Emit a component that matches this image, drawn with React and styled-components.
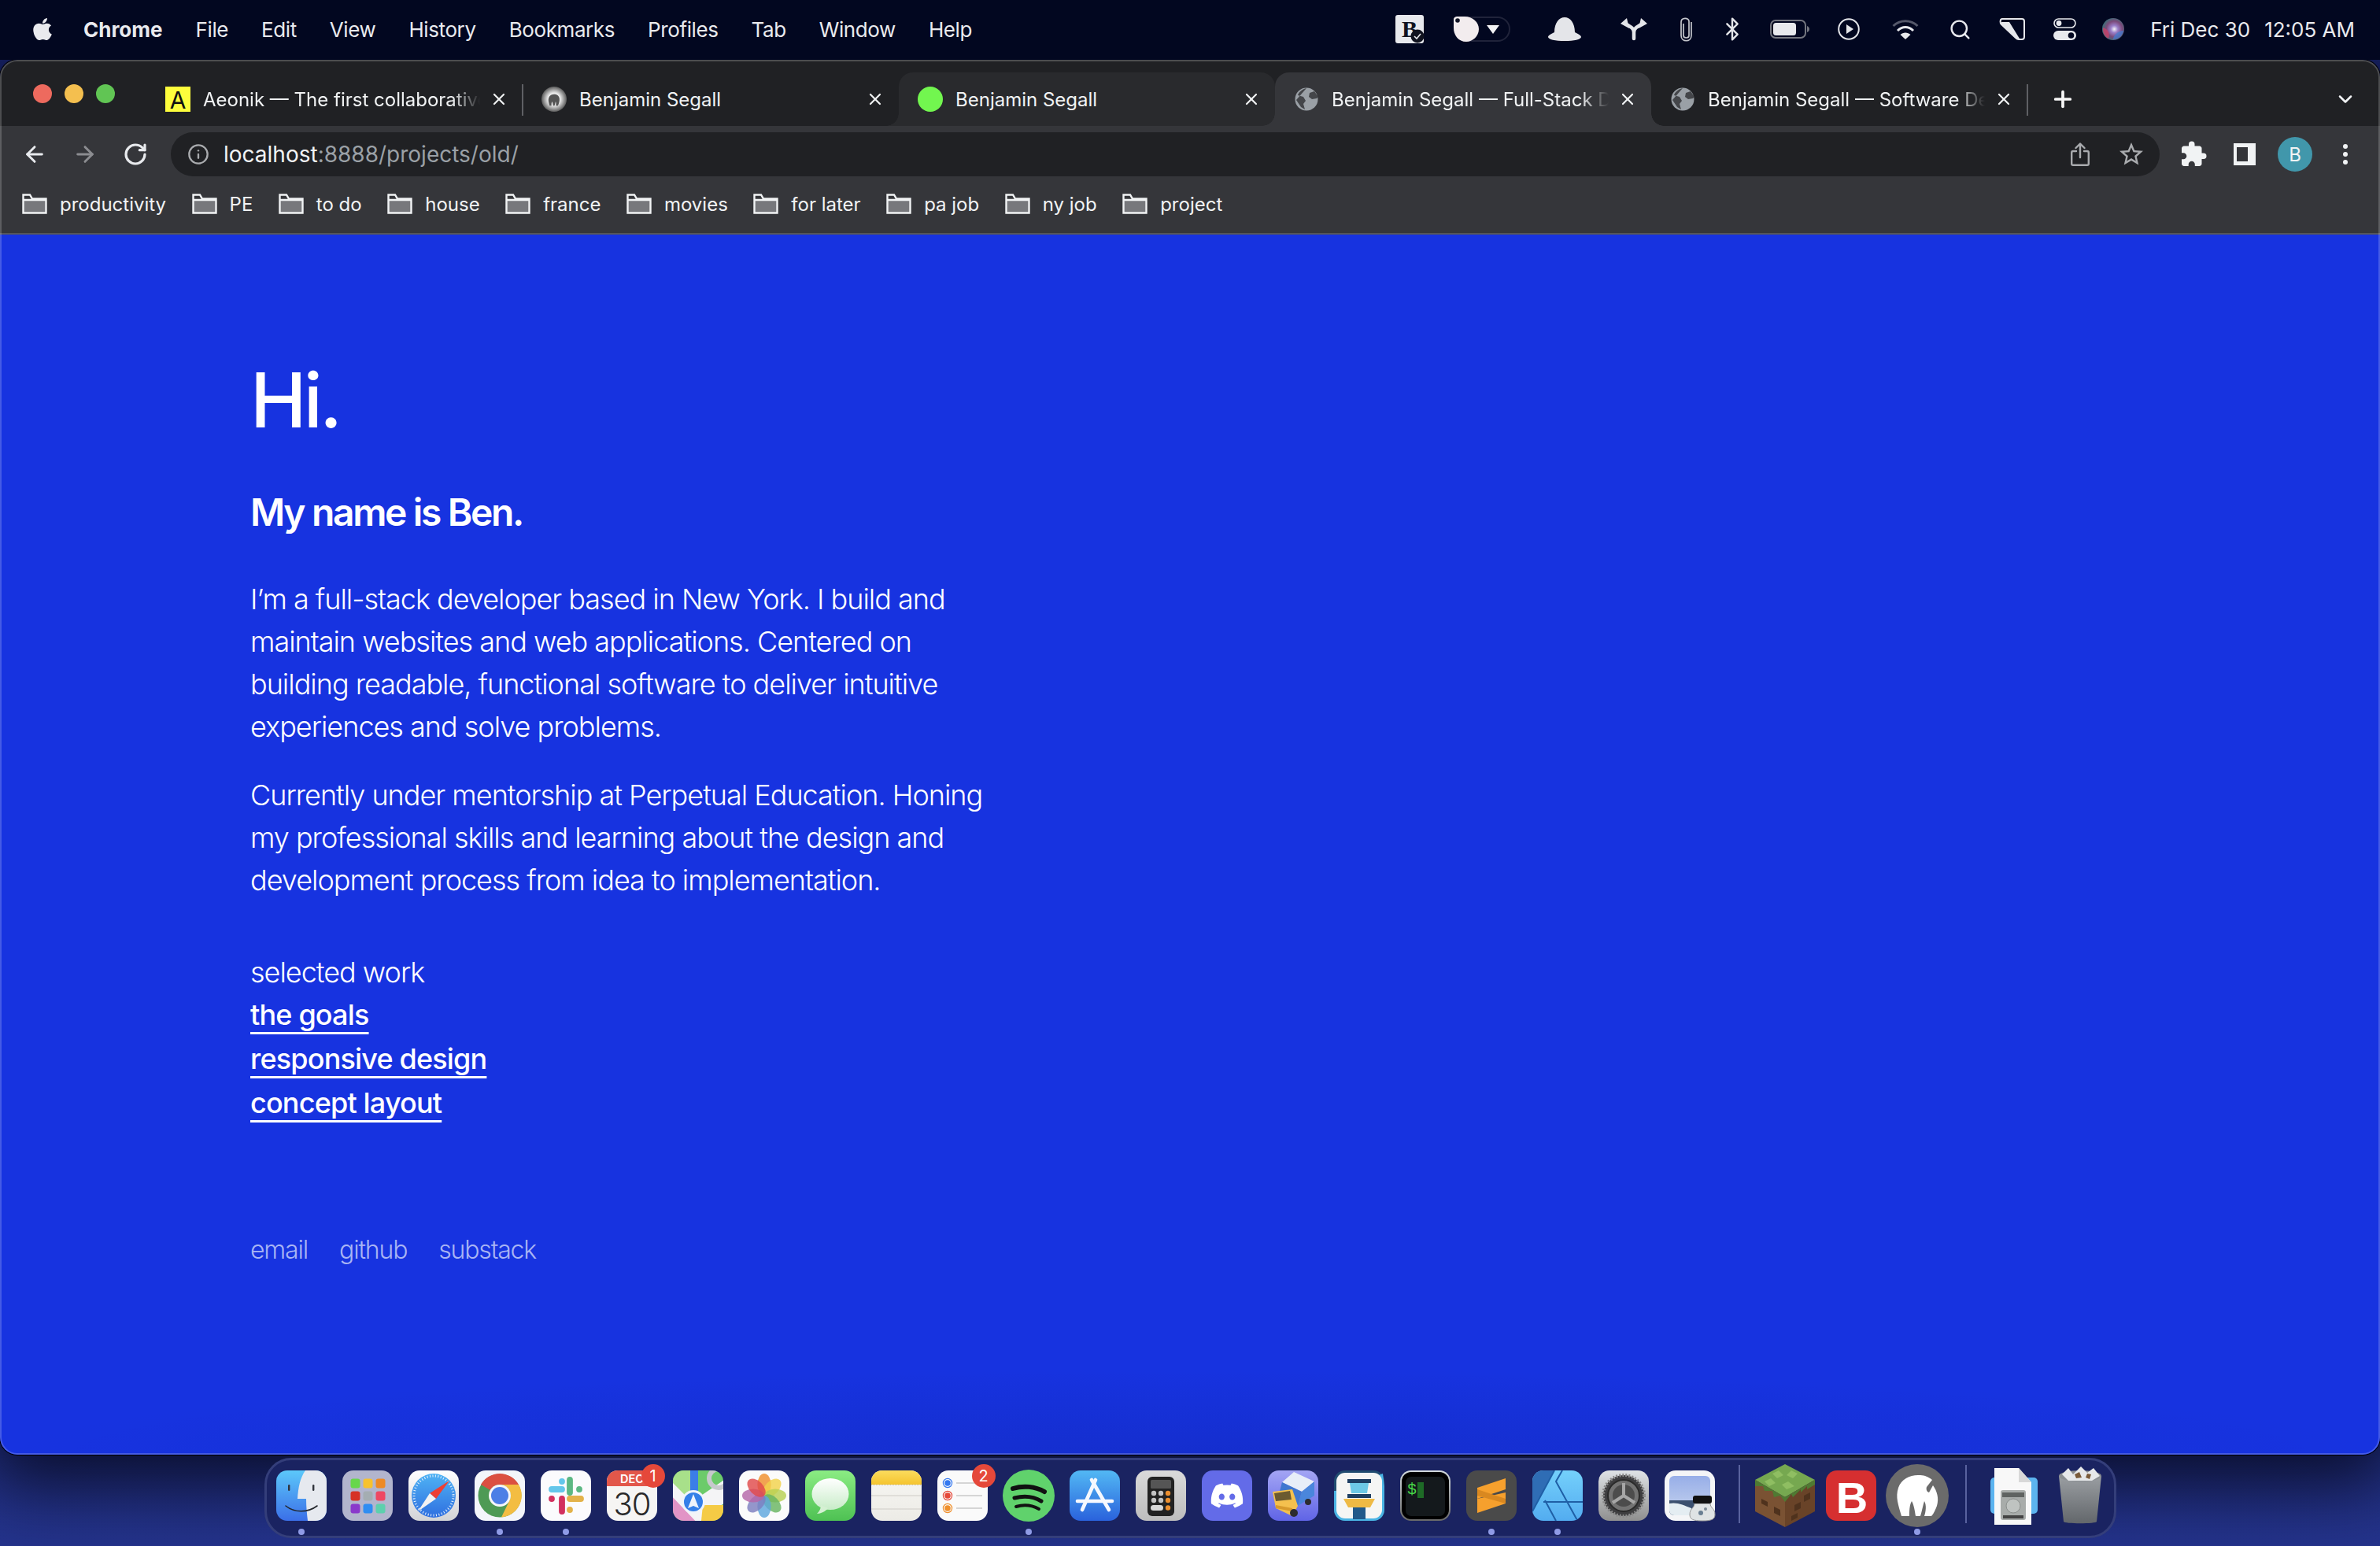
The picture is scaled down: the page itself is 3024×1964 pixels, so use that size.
import React from 'react';
import styled, { createGlobalStyle } from 'styled-components';
import { FaApple, FaDiscord } from 'react-icons/fa';
import { MdExtension, MdStarBorder } from 'react-icons/md';
import { ArrowLeft, ArrowRight, RotateCw, Info, Search, Bluetooth, X, Plus, ChevronDown } from 'lucide-react';

const GlobalStyle = createGlobalStyle`
  html, body {
    margin: 0;
    padding: 0;
    background: #22318a;
    font-family: Inter, "Liberation Sans", sans-serif;
    overflow: hidden;
  }
  * { box-sizing: border-box; }
`;

const Page = styled.div`
  display: flex;
  flex-direction: column;
  width: 3024px;
  height: 1964px;
  overflow: hidden;
  background: linear-gradient(#1a2670, #24338c);
`;

/* menu bar */
const MenuBar = styled.div`
  position: relative;
  z-index: 2;
  flex: none;
  display: flex;
  align-items: center;
  height: 76px;
  padding: 0 32px 2px 38px;
  background: #020720;
  color: #e9eaee;
  font-size: 26px;
`;

const MenuItem = styled.span`
  margin-left: ${(p) => p.$gap ?? 42}px;
  font-weight: ${(p) => (p.$bold ? 700 : 400)};
  letter-spacing: ${(p) => (p.$bold ? 0 : -0.4)}px;
`;

const StatusArea = styled.div`
  display: flex;
  align-items: center;
  margin-left: auto;
`;

const StatusSlot = styled.div`
  display: flex;
  align-items: center;
  justify-content: center;
  margin-left: ${(p) => p.$gap}px;
  width: ${(p) => p.$w}px;
  height: 36px;
  flex: none;
  overflow: visible;
  svg { display: block; overflow: visible; }
`;

const DateText = styled.div`
  display: flex;
  gap: 18px;
  margin-left: 33px;
  font-size: 26px;
  white-space: nowrap;
`;

/* browser window */
const Window = styled.div`
  position: relative;
  z-index: 1;
  flex: none;
  display: flex;
  flex-direction: column;
  height: 1772px;
  border-radius: 22px;
  overflow: hidden;
  box-shadow: 0 0 0 1px #000, 0 20px 90px 20px rgba(0, 0, 8, 0.72);
  &::before {
    content: '';
    position: absolute;
    inset: 0;
    z-index: 5;
    border: 2px solid rgba(255, 255, 255, 0.2);
    border-radius: 22px;
    pointer-events: none;
  }
`;

const TabStrip = styled.div`
  flex: none;
  display: flex;
  align-items: flex-end;
  height: 84px;
  padding-right: 35px;
  background: #202124;
`;

const Lights = styled.div`
  display: flex;
  gap: 16px;
  align-self: flex-start;
  margin: 31px 40px 0 42px;
`;

const Light = styled.span`
  width: 24px;
  height: 24px;
  border-radius: 50%;
  background: ${(p) => p.$color};
`;

const tabBg = { active: '#35363a', hover: '#292a2d' };

const Tab = styled.div`
  position: relative;
  flex: none;
  display: flex;
  align-items: center;
  width: 478px;
  height: 68px;
  padding: 0 21px 0 24px;
  color: #f1f3f4;
  font-size: 24px;
  border-radius: 18px 18px 0 0;
  z-index: ${(p) => (p.$state === 'active' ? 2 : 1)};
  background: ${(p) => tabBg[p.$state] ?? 'transparent'};
  ${(p) =>
    tabBg[p.$state]
      ? `
    &::before, &::after {
      content: '';
      position: absolute;
      bottom: 0;
      width: 16px;
      height: 16px;
    }
    &::before {
      left: -16px;
      background: radial-gradient(circle at 0 0, transparent 15.5px, ${tabBg[p.$state]} 16px);
    }
    &::after {
      right: -16px;
      background: radial-gradient(circle at 100% 0, transparent 15.5px, ${tabBg[p.$state]} 16px);
    }`
      : ''}
`;

const Favicon = styled.span`
  flex: none;
  display: flex;
  width: 32px;
  height: 32px;
  margin-right: 16px;
  svg { display: block; }
`;

const TabTitle = styled.span`
  flex: 1;
  min-width: 0;
  overflow: hidden;
  white-space: nowrap;
  ${(p) =>
    p.$fade
      ? `mask-image: linear-gradient(to right, #000 calc(100% - 36px), transparent);`
      : ''}
`;

const TabClose = styled(X)`
  flex: none;
  width: 24px;
  height: 24px;
  margin: 0 -3px 0 12px;
  color: #f1f3f4;
`;

const TabSep = styled.span`
  flex: none;
  width: 2px;
  height: 40px;
  margin: 0 -1px 13px;
  background: #5f6064;
`;

const NewTab = styled(Plus)`
  flex: none;
  width: 32px;
  height: 32px;
  margin: 0 0 18px 29px;
  color: #f6f6f6;
`;

const TabMenu = styled(ChevronDown)`
  flex: none;
  width: 28px;
  height: 28px;
  margin: 0 -5px 20px auto;
  color: #f1f3f4;
`;

const Toolbar = styled.div`
  flex: none;
  display: flex;
  align-items: center;
  height: 64px;
  padding: 8px 0 0 28px;
  background: #35363a;
`;

const NavButton = styled.span`
  display: flex;
  margin-right: ${(p) => p.$gap ?? 32}px;
  color: ${(p) => (p.$off ? '#8b8c90' : '#e8eaed')};
`;

const AddressBar = styled.div`
  flex: none;
  display: flex;
  align-items: center;
  width: 2527px;
  height: 56px;
  padding: 0 18px 0 21px;
  border-radius: 28px;
  background: #202124;
  font-size: 28px;
  color: #9aa0a6;
`;

const Url = styled.span`
  margin-left: 18px;
  b {
    font-weight: 400;
    color: #f1f3f4;
  }
`;

const ToolIcon = styled.span`
  display: flex;
  flex: none;
  margin-left: ${(p) => p.$gap}px;
  ${(p) => (p.$auto ? 'margin-left: auto;' : '')}
`;

const PanelIcon = styled.span`
  flex: none;
  width: 28px;
  height: 28px;
  margin-left: 33px;
  border: solid #f1f3f4;
  border-width: 5px 5px 5px 4px;
  border-right-width: 10px;
`;

const Avatar = styled.span`
  flex: none;
  display: flex;
  align-items: center;
  justify-content: center;
  width: 44px;
  height: 44px;
  margin-left: 28px;
  border-radius: 50%;
  background: #4197ab;
  color: #f1f3f4;
  font-size: 24px;
`;

const Kebab = styled.span`
  flex: none;
  display: flex;
  flex-direction: column;
  gap: 4px;
  margin-left: 39px;
  i {
    width: 6px;
    height: 6px;
    border-radius: 50%;
    background: #f1f3f4;
  }
`;

const BookmarkBar = styled.div`
  flex: none;
  display: flex;
  align-items: center;
  gap: 32.5px;
  height: 74px;
  padding: 0 0 2px 28px;
  background: #35363a;
  border-bottom: 2px solid #55565a;
  color: #f1f3f4;
  font-size: 24px;
`;

const Bookmark = styled.span`
  display: flex;
  align-items: center;
  gap: 16px;
  white-space: nowrap;
`;

/* page content */
const Content = styled.main`
  position: relative;
  flex: 1;
  padding: 153px 0 0 318px;
  background: #1733e0;
  color: #fff;
  &::after {
    content: '';
    position: absolute;
    left: 0;
    right: 0;
    bottom: 0;
    height: 110px;
    background: radial-gradient(ellipse 50% 100% at 50% 100%, rgba(8, 20, 110, 0.16), transparent);
    pointer-events: none;
  }
`;

const Hello = styled.h1`
  margin: 0 0 56px;
  font-size: 96px;
  line-height: 1.2;
  font-weight: 500;
  letter-spacing: -0.04em;
`;

const Name = styled.h2`
  margin: 0 0 54px;
  font-size: 48px;
  line-height: 1.2;
  font-weight: 600;
  letter-spacing: -0.049em;
`;

const Paragraph = styled.p`
  width: 950px;
  margin: 0 0 33px;
  font-size: 36px;
  line-height: 54px;
  font-weight: 300;
  letter-spacing: -0.028em;
`;

const Selected = styled.div`
  margin-top: 64px;
  font-size: 36px;
  line-height: 52px;
  font-weight: 300;
  letter-spacing: -0.028em;
`;

const WorkLink = styled.a`
  display: block;
  width: fit-content;
  font-size: 36px;
  line-height: 56px;
  font-weight: 500;
  letter-spacing: -0.023em;
  color: #fff;
  text-decoration: underline;
  text-decoration-thickness: 3px;
  text-underline-offset: 9px;
  text-decoration-skip-ink: none;
`;

const Footer = styled.div`
  display: flex;
  gap: 40px;
  margin-top: 135px;
  font-size: 32px;
  line-height: 48px;
  font-weight: 300;
  letter-spacing: -0.037em;
  color: #a9b5f4;
`;

/* dock */
const DockArea = styled.div`
  position: relative;
  z-index: 2;
  flex: 1;
  display: flex;
  justify-content: center;
  padding-top: 4px;
`;

const Dock = styled.div`
  display: flex;
  height: 102px;
  padding: 13px 1px 0 2px;
  border: 3px solid #343e7a;
  border-radius: 34px;
  background: #1a2361;
`;

const DockCell = styled.div`
  flex: none;
  display: flex;
  flex-direction: column;
  align-items: center;
  width: 84px;
`;

const DockIcon = styled.div`
  position: relative;
  display: flex;
  align-items: center;
  justify-content: center;
  width: 64px;
  height: 64px;
  svg { flex: none; display: block; overflow: visible; }
`;

const Badge = styled.span`
  position: absolute;
  top: -8px;
  right: -10px;
  display: flex;
  align-items: center;
  justify-content: center;
  width: 30px;
  height: 30px;
  border-radius: 50%;
  background: #e5483a;
  color: #fff;
  font-size: 20px;
`;

const RunDot = styled.span`
  width: 8px;
  height: 8px;
  margin-top: 10px;
  border-radius: 50%;
  background: #8f9be6;
  opacity: ${(p) => (p.$on ? 1 : 0)};
`;

const DockSep = styled.span`
  flex: none;
  width: 2px;
  height: 74px;
  margin: -7px ${(p) => p.$r}px 0 ${(p) => p.$l}px;
  background: #59629e;
`;

/* little drawings */
const FolderIcon = () => (
  <svg width="32" height="26" viewBox="0 0 32 26">
    <path d="M2 8h28v16H2z" fill="#77787c" />
    <path d="M1.5 3V24.5H30.5V6.5H13L10 1.5H1.5z M1.5 8H30.5" fill="none" stroke="#f1f3f4" strokeWidth="2.4" />
  </svg>
);

const Globe = () => (
  <svg width="32" height="32" viewBox="0 0 32 32">
    <circle cx="16" cy="16" r="14.5" fill="#9aa0a6" />
    <path d="M16 2c-5 1-10 5-11 9l7 2 3 5-3 4 2 7-5-3-6-9z M26 6l-6 2-1 5 4 3 6-1 2-2z" fill="#35363a" opacity=".85" />
  </svg>
);

const Squircle = ({ fill, stroke }) => <rect x="0" y="0" width="64" height="64" rx="14" fill={fill} stroke={stroke} />;

const Grad = ({ id, from, to, x2 = 0, y2 = 1 }) => (
  <linearGradient id={id} x1="0" y1="0" x2={x2} y2={y2}>
    <stop offset="0" stopColor={from} />
    <stop offset="1" stopColor={to} />
  </linearGradient>
);

const Ico = ({ w = 64, h = 64, vb = '0 0 64 64', children }) => (
  <svg width={w} height={h} viewBox={vb}>{children}</svg>
);

const Finder = () => (
  <Ico>
    <defs><Grad id="fi" from="#5cc8fa" to="#3b6fe8" /></defs>
    <clipPath id="fic"><rect width="64" height="64" rx="14" /></clipPath>
    <g clipPath="url(#fic)">
      <rect width="64" height="64" fill="url(#fi)" />
      <path d="M37 0C30 10 28 22 27 36h11c0 10 1 20 2 28h24V0z" fill="#e6e9ef" />
    </g>
    <rect x="15" y="18" width="2.4" height="8" rx="1.2" fill="#30343c" />
    <rect x="46" y="18" width="2.4" height="8" rx="1.2" fill="#30343c" />
    <path d="M12 45c11 9 28 9 40 0" fill="none" stroke="#23262c" strokeWidth="1.6" strokeLinecap="round" />
  </Ico>
);

const Launchpad = () => {
  const colors = ['#67d74b', '#f7c22f', '#ee8a24', '#d63226', '#a4adb2', '#ee4763', '#8a39cb', '#2f8df2', '#5dd0ad'];
  return (
    <Ico>
      <Squircle fill="#b2b5cd" />
      {colors.map((c, i) => (
        <rect key={c} x={10.5 + (i % 3) * 16} y={10.5 + Math.floor(i / 3) * 16} width="12" height="12" rx="3" fill={c} />
      ))}
    </Ico>
  );
};

const Safari = () => (
  <Ico>
    <defs><Grad id="sa" from="#ffffff" to="#d2d3d6" /><Grad id="sb" from="#4fb3f4" to="#2f6fe0" /></defs>
    <Squircle fill="url(#sa)" />
    <circle cx="32" cy="32" r="28" fill="url(#sb)" />
    <circle cx="32" cy="32" r="25" fill="none" stroke="#e8f2fb" strokeWidth="3" strokeDasharray="1 2.5" />
    <path d="M52 13 27 29 35 36z" fill="#ee3f33" />
    <path d="M12 52 35 36 27 29z" fill="#f2f2f2" />
  </Ico>
);

const Chrome = () => (
  <Ico>
    <Squircle fill="#f3f5fa" />
    <circle cx="32" cy="32" r="27.5" fill="#4e9a55" />
    <path d="M8 18A27.5 27.5 0 0 1 56 18H32A14 14 0 0 0 20 25z" fill="#db5041" />
    <path d="M56 18A27.5 27.5 0 0 1 34 59.4L44 39A14 14 0 0 0 32 18z" fill="#f3bd42" />
    <circle cx="32" cy="32" r="14" fill="#f5f6f8" />
    <circle cx="32" cy="32" r="11" fill="#4c7fe6" />
  </Ico>
);

const Slack = () => (
  <Ico>
    <Squircle fill="#fbfbfd" />
    <g strokeWidth="7.8" strokeLinecap="round" fill="none">
      <path d="M27 14v0M27 24H14" stroke="#63c6ea" />
      <path d="M37 12v16M49 24h0" stroke="#5cb883" />
      <path d="M37 36h14M37 50v0" stroke="#e3b24a" />
      <path d="M27 36v16M14 36h0" stroke="#d2315f" />
    </g>
  </Ico>
);

const Calendar = () => (
  <Ico>
    <Squircle fill="#f6f5f3" />
    <path d="M0 20V14A14 14 0 0 1 14 0H50A14 14 0 0 1 64 14V20z" fill="#e2574a" />
    <text x="32" y="16" textAnchor="middle" fontSize="14.5" fontWeight="600" fill="#fff" fontFamily="Inter">DEC</text>
    <text x="32" y="57" textAnchor="middle" fontSize="40" fontWeight="300" fill="#2a2a2a" fontFamily="Inter" letterSpacing="-1">30</text>
  </Ico>
);

const Maps = () => (
  <Ico>
    <clipPath id="mac"><rect width="64" height="64" rx="14" /></clipPath>
    <g clipPath="url(#mac)">
      <rect width="64" height="64" fill="#6ccb6a" />
      <path d="M0 0h26v50L0 20z" fill="#a8e08a" />
      <path d="M0 30 24 52 34 64H0z" fill="#e294c6" />
      <path d="M-4 12 40 56 34 70 -4 30z M24 40 68 10v30L36 60z" fill="#f4f4f6" />
      <path d="M38 44 64 44V64H36z" fill="#f5cb45" />
      <path d="M22 0h10v30H22z" fill="#3b7ee8" />
      <circle cx="58" cy="10" r="12" fill="none" stroke="#c6c9cc" strokeWidth="6" />
      <circle cx="26" cy="40" r="15" fill="#f0f4fa" />
      <circle cx="26" cy="40" r="12" fill="#347fe8" />
      <path d="M26 30 33 48 26 45 19 48z" fill="#eef3fb" />
    </g>
  </Ico>
);

const Photos = () => {
  const petals = ['#ef8f2c', '#f2d24a', '#b7cf53', '#68b560', '#5da6dd', '#7d7fc0', '#b567a8', '#e04a4a'];
  return (
    <Ico>
      <Squircle fill="#fbfbfb" />
      {petals.map((c, i) => (
        <ellipse key={c} cx="32" cy="18" rx="8.6" ry="14" fill={c} opacity=".82" transform={`rotate(${i * 45} 32 32)`} />
      ))}
    </Ico>
  );
};

const Messages = () => (
  <Ico>
    <defs><Grad id="me" from="#8bec83" to="#4ec153" /><Grad id="mb" from="#ffffff" to="#c8ecc8" /></defs>
    <Squircle fill="url(#me)" />
    <ellipse cx="32" cy="30" rx="23.5" ry="20" fill="url(#mb)" />
    <path d="M20 44c0 5-2 8-5 11 5 0 11-3 14-7z" fill="#d5f0d3" />
  </Ico>
);

const Notes = () => (
  <Ico>
    <defs><Grad id="no" from="#fbdc5e" to="#f5c42e" /><Grad id="nb" from="#f8f7f3" to="#ecebe6" /></defs>
    <Squircle fill="url(#nb)" />
    <path d="M0 18V14A14 14 0 0 1 14 0H50A14 14 0 0 1 64 14V18z" fill="url(#no)" />
    <path d="M0 18.5H64" stroke="#c8c6c0" strokeWidth="1" strokeDasharray="1 1" />
    <path d="M0 32H64M0 49H64" stroke="#dad8d2" strokeWidth="1.4" />
  </Ico>
);

const Reminders = () => (
  <Ico>
    <Squircle fill="#fafafa" />
    {[['#3478f0', 16], ['#e5483a', 32], ['#ef8f2c', 48]].map(([c, y]) => (
      <g key={c}>
        <circle cx="13" cy={y} r="5.6" fill="none" stroke={c} strokeWidth="1.2" />
        <circle cx="13" cy={y} r="3.8" fill={c} />
        <path d={`M24 ${y}H57`} stroke="#c9c9c9" strokeWidth="1.6" />
      </g>
    ))}
  </Ico>
);

const Spotify = () => (
  <svg width="66" height="66" viewBox="0 0 66 66">
    <circle cx="33" cy="33" r="33" fill="#60d26c" />
    <g fill="none" stroke="#111" strokeLinecap="round">
      <path d="M13 24c13-4 28-3 40 4" strokeWidth="6" />
      <path d="M15 36c12-3 24-2 34 4" strokeWidth="5" />
      <path d="M17 47c10-3 20-2 29 3" strokeWidth="4" />
    </g>
  </svg>
);

const AppStore = () => (
  <Ico>
    <defs><Grad id="ap" from="#52b8f4" to="#2a62dc" /></defs>
    <Squircle fill="url(#ap)" />
    <g stroke="#f6f8fe" strokeWidth="4.6" strokeLinecap="round">
      <path d="M33 12 16 50" />
      <path d="M28 12 50 50" />
      <path d="M10 39H54" />
    </g>
  </Ico>
);

const Calculator = () => {
  const keys = ['#c4c4c4', '#c4c4c4', '#ec8f2f', '#c4c4c4', '#c4c4c4', '#ec8f2f'];
  return (
    <Ico>
      <defs><Grad id="ca" from="#dadada" to="#bdbdbd" /></defs>
      <Squircle fill="url(#ca)" />
      <rect x="15" y="8" width="34" height="50" rx="6" fill="#222" />
      <rect x="19" y="12" width="26" height="11" rx="1.5" fill="#555" />
      {keys.map((c, i) => (
        <circle key={i} cx={23 + (i % 3) * 9} cy={29 + Math.floor(i / 3) * 9} r="3.2" fill={c} />
      ))}
      <rect x="19" y="44" width="16" height="7" rx="3.5" fill="#d8d8d8" />
      <circle cx="41" cy="47.5" r="3.2" fill="#ec8f2f" />
    </Ico>
  );
};

const Discord = () => (
  <Ico>
    <Squircle fill="#636be8" />
    <FaDiscord x="10" y="10" size={44} color="#fff" />
  </Ico>
);

const Transmit = () => (
  <Ico>
    <defs><Grad id="tr" from="#a3a5f4" to="#6064e6" /></defs>
    <Squircle fill="url(#tr)" />
    <path d="M33 2 59 14 43 27 18 15z" fill="#e8eef8" />
    <path d="M43 27 59 14V32L38 45z" fill="#4a86dc" />
    <path d="M18 15 43 27 38 45 14 30z" fill="#3f77cf" />
    <path d="M6 27 31 24 38 45 31 58 10 48z" fill="#f4c04e" />
    <path d="M8 29 28 26 30 37 10 39z" fill="#6b5a30" />
    <path d="M10 44 31 48V52L10 48z" fill="#d89a2c" />
    <circle cx="33" cy="54" r="5" fill="#2c2c30" />
    <circle cx="51" cy="40" r="4" fill="#2c2c30" />
  </Ico>
);

const Tower = () => (
  <Ico>
    <Squircle fill="#204c70" />
    <path d="M2 26H0V50A14 14 0 0 0 14 64H50A14 14 0 0 0 64 50V20L62 4z" fill="#4ab4e4" />
    <rect x="3" y="3" width="58" height="58" rx="11" fill="#f5f6f4" />
    <rect x="17" y="11" width="30" height="5" fill="#1e3f63" />
    <path d="M20 16H44L42 29H22z" fill="#6dc9e6" />
    <rect x="17" y="30" width="30" height="5" fill="#1e3f63" />
    <path d="M12 36H52L46 47H18z" fill="#eeba45" />
    <rect x="24" y="47" width="16" height="15" fill="#215a8a" />
  </Ico>
);

const Terminal = () => (
  <Ico>
    <defs><Grad id="te" from="#d4dbde" to="#6a6a6a" /></defs>
    <rect width="64" height="64" rx="14" fill="url(#te)" />
    <rect x="2" y="2" width="60" height="60" rx="12" fill="#000" />
    <rect x="7" y="8" width="50" height="50" rx="7" fill="#14191c" />
    <text x="9" y="30" fontSize="20" fontFamily="'Liberation Mono'" fill="#48d848">$</text>
    <rect x="22" y="15" width="8" height="20" fill="#1e6b26" />
  </Ico>
);

const Sublime = () => (
  <Ico>
    <Squircle fill="#4a4a4a" />
    <path d="M14 22 50 10V24L14 36z" fill="#f6a02d" />
    <path d="M14 36 50 28V42L14 54z" fill="#f6a02d" />
    <path d="M14 24 50 36V42L14 32z" fill="#d98820" />
  </Ico>
);

const Affinity = () => (
  <Ico>
    <defs><Grad id="af" from="#74d0fb" to="#53acf0" /></defs>
    <clipPath id="afc"><rect width="64" height="64" rx="14" /></clipPath>
    <g clipPath="url(#afc)">
      <rect width="64" height="64" fill="url(#af)" />
      <path d="M0 0H28L0 52z" fill="#2f6db5" />
      <path d="M28 0 0 52M38 0 30 14 64 76M14 40H64M16 38 30 64" fill="none" stroke="#1f5fa6" strokeWidth="2" />
    </g>
  </Ico>
);

const SystemPrefs = () => (
  <Ico>
    <defs><Grad id="sp" from="#dfe3e6" to="#8f8f8f" /></defs>
    <Squircle fill="url(#sp)" />
    <circle cx="32" cy="32" r="26" fill="#3e3e40" />
    <circle cx="32" cy="32" r="26" fill="none" stroke="#8a8a8a" strokeWidth="4" strokeDasharray="2 2" />
    <circle cx="32" cy="32" r="20" fill="#737373" stroke="#2a2a2a" strokeWidth="2" />
    <circle cx="32" cy="32" r="14" fill="#4c4c4c" />
    <path d="M32 32V16M32 32 18 41M32 32 46 41" stroke="#a6a6a6" strokeWidth="4" />
  </Ico>
);

const Preview = () => (
  <Ico>
    <defs><Grad id="pr" from="#97aee8" to="#c7d4ee" /></defs>
    <Squircle fill="#f4f5f7" />
    <rect x="6" y="7" width="52" height="50" rx="6" fill="url(#pr)" />
    <path d="M6 38H58V51A6 6 0 0 1 52 57H12A6 6 0 0 1 6 51z" fill="#3a4f6e" />
    <path d="M6 42c10-2 18 2 28 6v9H12A6 6 0 0 1 6 51z" fill="#e4edf2" />
    <path d="M32 56c0-8 6-8 6-14h20c0 6 6 6 6 14 0 6-4 8-16 8s-16-2-16-8z" fill="#dfe3e4" stroke="#999" strokeWidth="1" />
    <rect x="36" y="32" width="24" height="10" rx="3" fill="#111" />
    <circle cx="46" cy="54" r="3" fill="#6a7f92" />
    <circle cx="52" cy="49" r="2" fill="#7d8a94" />
  </Ico>
);

const Minecraft = () => (
  <svg width="76" height="80" viewBox="0 0 76 80">
    <path d="M38 0 76 20 38 42 0 20z" fill="#76a850" />
    <path d="M0 20 38 42V80L0 60z" fill="#7a5233" />
    <path d="M76 20 38 42V80L76 60z" fill="#694328" />
    <path d="M0 20 38 42 76 20V26L66 32V28L58 36V32L48 42 46 38 38 48 32 40 24 42 22 34 12 34 10 28 0 28z" fill="#4f7a32" />
    <path d="M22 12 30 8 36 14 28 18zM46 8 54 12 48 18 40 14zM34 26 42 22 50 28 40 32zM12 22 20 18 26 24 18 28z" fill="#8fbe62" />
    <path d="M8 44l8 4v6l-8-4zM24 54l8 4v8l-8-4zM50 52l8-4v8l-8 4zM62 40l8-4v8l-8 4zM46 66l8-4v6l-8 4z" fill="#4f321d" />
  </svg>
);

const Bitdefender = () => (
  <Ico>
    <Squircle fill="#d62f30" />
    <text x="33" y="54" textAnchor="middle" fontSize="56" fontWeight="700" fill="#fff" fontFamily="'Liberation Sans'">B</text>
  </Ico>
);

const Mamp = () => (
  <svg width="80" height="80" viewBox="0 0 80 80">
    <circle cx="40" cy="40" r="40" fill="#6b6b6b" />
    <svg x="8" y="8" width="64" height="64" viewBox="0 0 64 64">
      <path
        d="M12 58C8 44 4 34 8 22 12 10 24 5 36 6c6 .5 10 2 15 6l-7 9c-1 3 0 6 3 7l5-9c5 7 8 16 5 26-2 5-4 10-7 13h-9c2-6 3-14 0-19-2 6-3 13-5 19h-6c-1-6-2-14-5-19-3 5-3 13-3 19z"
        fill="#fff"
      />
    </svg>
  </svg>
);

const Applications = () => (
  <svg width="60" height="74" viewBox="0 0 60 74">
    <rect x="0" y="14" width="60" height="46" rx="5" fill="#5cb4ef" />
    <path d="M5 2H36L52 20V74H5z" fill="#f8f8f8" />
    <path d="M36 2 52 20H36z" fill="#d8d8d8" />
    <rect x="13" y="30" width="32" height="38" rx="3" fill="#a8acaa" />
    <rect x="15" y="33" width="28" height="6" fill="#5f6361" />
    <circle cx="29" cy="50" r="9" fill="#bfc3c1" stroke="#8b8f8d" />
    <rect x="16" y="62" width="26" height="4" fill="#444" />
  </svg>
);

const Trash = () => (
  <svg width="58" height="74" viewBox="0 0 58 74">
    <defs><Grad id="tc" from="#9a9ea2" to="#63676b" /></defs>
    <path d="M2 12 8 70c0 3 42 3 42 0L56 12z" fill="url(#tc)" />
    <ellipse cx="29" cy="12" rx="27" ry="7" fill="#8b8f93" />
    <path d="M6 10 14 2 20 10 30 0 38 8 46 2 54 12 44 18H14z" fill="#e6e8ea" />
    <path d="M22 10l6-3 3 7-7 1zM38 9l5 1-2 6-5-2z" fill="#7a5b3a" />
  </svg>
);

const BIcon = () => (
  <svg width="36" height="36" viewBox="0 0 36 36">
    <rect width="36" height="36" rx="3" fill="#e8e9ed" />
    <text x="8" y="28" fontSize="30" fontWeight="700" fontFamily="'Liberation Serif'" fill="#11131f">B</text>
    <circle cx="28" cy="27" r="8.5" fill="#11131f" />
    <path d="M24 27l3 3 5-6" fill="none" stroke="#e8e9ed" strokeWidth="1.6" />
  </svg>
);

const ToggleIcon = () => (
  <svg width="72" height="32" viewBox="0 0 72 32">
    <rect x="1" y="1" width="70" height="30" rx="15" fill="none" stroke="#20233a" strokeWidth="2" />
    <path d="M0 4C0 1 2 0 5 0H14C24 0 32 7 32 16S24 32 16 32C6 32 0 24 0 14z" fill="#f2ecee" />
    <circle cx="5" cy="5" r="2.8" fill="#111425" />
    <path d="M42 11H58L50 22z" fill="#f2f2f4" />
  </svg>
);

const HatIcon = () => (
  <svg width="42" height="30" viewBox="0 0 42 30">
    <path d="M8 19C8 7 14 0 21 0S34 7 34 19c4 2 8 4 8 6 0 3-9 5-21 5S0 28 0 25c0-2 4-4 8-6z" fill="#e4e5e9" />
  </svg>
);

const SplitIcon = () => (
  <svg width="34" height="28" viewBox="0 0 34 28">
    <path d="M17 26V18C17 13 13 11 6 7M17 18C17 13 21 11 28 7" fill="none" stroke="#e4e5e9" strokeWidth="4.5" strokeLinecap="round" />
    <path d="M0 7 8 0 11 13zM34 7 26 0 23 13z" fill="#e4e5e9" />
  </svg>
);

const ClipIcon = () => (
  <svg width="17" height="32" viewBox="0 0 17 32">
    <path d="M5 9V24C5 28 12 28 12 24V6C12 1 2 1 2 7V24C2 33 15 33 15 24V7" fill="none" stroke="#c4c6cc" strokeWidth="1.7" />
  </svg>
);

const BatteryIcon = () => (
  <svg width="50" height="24" viewBox="0 0 50 24">
    <rect x="1" y="1" width="44" height="22" rx="6" fill="none" stroke="#74767f" strokeWidth="2" />
    <rect x="4" y="4" width="29" height="16" rx="3.5" fill="#e8e9ed" />
    <path d="M47 8c2 1 3 2 3 4s-1 3-3 4z" fill="#74767f" />
  </svg>
);

const PlayIcon = () => (
  <svg width="28" height="28" viewBox="0 0 28 28">
    <circle cx="14" cy="14" r="12.8" fill="none" stroke="#e4e5e9" strokeWidth="2" />
    <path d="M11 8 20 14 11 20z" fill="#e4e5e9" />
  </svg>
);

const WifiIcon = () => (
  <svg width="34" height="26" viewBox="0 0 34 26">
    <path d="M1.5 9C10 .5 24 .5 32.5 9" fill="none" stroke="#55586a" strokeWidth="3" />
    <path d="M7 15C13 9 21 9 27 15" fill="none" stroke="#e8e9ed" strokeWidth="3" />
    <path d="M17 26 10.5 20C14 16.5 20 16.5 23.5 20z" fill="#e8e9ed" />
  </svg>
);

const TagIcon = () => (
  <svg width="32" height="28" viewBox="0 0 32 28">
    <path d="M3 1H28C30 1 31 2 31 4V24C31 26 30 27 28 27H24C22 27 21 26 20 25L2 8C0 6 0 1 3 1z" fill="none" stroke="#e6e7eb" strokeWidth="2" />
    <path d="M2 5H12L25 26H21L2 8z" fill="#e6e7eb" />
  </svg>
);

const ControlsIcon = () => (
  <svg width="29" height="28" viewBox="0 0 29 28">
    <rect x="1" y="1" width="27" height="11" rx="5.5" fill="none" stroke="#e8e9ed" strokeWidth="1.6" />
    <circle cx="7" cy="6.5" r="3.4" fill="#e8e9ed" />
    <rect y="16" width="29" height="12" rx="6" fill="#e8e9ed" />
    <circle cx="22.5" cy="22" r="3.8" fill="#020720" />
  </svg>
);

const SiriIcon = () => (
  <svg width="28" height="28" viewBox="0 0 28 28">
    <defs>
      <radialGradient id="sr" cx="0.55" cy="0.5" r="0.55">
        <stop offset="0" stopColor="#f4f4f8" />
        <stop offset="0.3" stopColor="#9a7fc8" />
        <stop offset="0.65" stopColor="#7b4a7a" />
        <stop offset="1" stopColor="#3a6f78" />
      </radialGradient>
    </defs>
    <circle cx="14" cy="14" r="14" fill="url(#sr)" />
    <path d="M1 12A13 13 0 0 0 8 26C10 20 8 14 1 12z" fill="#d63f66" opacity=".7" />
    <path d="M27 16A13 13 0 0 1 14 27C14 22 20 16 27 16z" fill="#3f7fd6" opacity=".7" />
  </svg>
);

const ShareIcon = () => (
  <svg width="24" height="30" viewBox="0 0 24 30">
    <g fill="none" stroke="#a9abae" strokeWidth="2.4" strokeLinecap="round" strokeLinejoin="round">
      <path d="M7 11H3C2 11 1.2 12 1.2 13V27C1.2 28 2 28.8 3 28.8H21C22 28.8 22.8 28 22.8 27V13C22.8 12 22 11 21 11H17" />
      <path d="M12 19V2M6.5 7 12 1.5 17.5 7" />
    </g>
  </svg>
);

const tabs = [
  { title: 'Aeonik — The first collaborative', fade: true, icon: 'aeonik' },
  { title: 'Benjamin Segall', icon: 'ball', sep: true },
  { title: 'Benjamin Segall', icon: 'green', state: 'hover' },
  { title: 'Benjamin Segall — Full-Stack Developer', fade: true, icon: 'globe', state: 'active' },
  { title: 'Benjamin Segall — Software Developer', fade: true, icon: 'globe' },
];

const TabIcon = ({ kind }) => {
  if (kind === 'aeonik') {
    return (
      <svg width="32" height="32" viewBox="0 0 32 32">
        <rect width="32" height="32" fill="#fdfd3c" />
        <text x="16" y="28" textAnchor="middle" fontSize="30" fill="#111" fontFamily="Inter">A</text>
      </svg>
    );
  }
  if (kind === 'ball') {
    return (
      <svg width="32" height="32" viewBox="0 0 32 32">
        <defs>
          <radialGradient id="bl">
            <stop offset="0.5" stopColor="#e8e8e8" />
            <stop offset="1" stopColor="#5c5c5c" />
          </radialGradient>
        </defs>
        <circle cx="16" cy="16" r="16" fill="url(#bl)" />
        <svg x="7" y="8" width="18" height="18" viewBox="0 0 64 64">
          <path d="M12 58C8 44 4 34 8 22 12 10 24 5 36 6c10 1 18 8 20 18 2 12-2 25-7 34h-9c1-6 2-14-1-19-2 6-3 13-5 19h-6c-1-6-2-14-5-19-3 5-3 13-3 19z" fill="#555" />
        </svg>
      </svg>
    );
  }
  if (kind === 'green') {
    return (
      <svg width="32" height="32" viewBox="0 0 32 32">
        <circle cx="16" cy="16" r="16" fill="#72f64f" />
      </svg>
    );
  }
  return <Globe />;
};

const bookmarks = ['productivity', 'PE', 'to do', 'house', 'france', 'movies', 'for later', 'pa job', 'ny job', 'project'];
const menus = ['File', 'Edit', 'View', 'History', 'Bookmarks', 'Profiles', 'Tab', 'Window', 'Help'];

const firstGroup = [
  { Icon: Finder, on: true },
  { Icon: Launchpad },
  { Icon: Safari },
  { Icon: Chrome, on: true },
  { Icon: Slack, on: true },
  { Icon: Calendar, badge: 1 },
  { Icon: Maps },
  { Icon: Photos },
  { Icon: Messages },
  { Icon: Notes },
  { Icon: Reminders, badge: 2 },
  { Icon: Spotify, on: true },
  { Icon: AppStore },
  { Icon: Calculator },
  { Icon: Discord },
  { Icon: Transmit },
  { Icon: Tower },
  { Icon: Terminal },
  { Icon: Sublime, on: true },
  { Icon: Affinity, on: true },
  { Icon: SystemPrefs },
  { Icon: Preview },
];
const secondGroup = [{ Icon: Minecraft }, { Icon: Bitdefender }, { Icon: Mamp, on: true }];
const thirdGroup = [{ Icon: Applications }, { Icon: Trash }];

const DockGroup = ({ items }) =>
  items.map(({ Icon, on, badge }) => (
    <DockCell key={Icon.name}>
      <DockIcon>
        <Icon />
        {badge ? <Badge>{badge}</Badge> : null}
      </DockIcon>
      <RunDot $on={on} />
    </DockCell>
  ));

export default function App() {
  return (
    <Page>
      <GlobalStyle />
      <MenuBar>
        <FaApple size={32} color="#e9eaee" />
        <MenuItem $bold $gap={36}>Chrome</MenuItem>
        {menus.map((m) => (
          <MenuItem key={m}>{m}</MenuItem>
        ))}
        <StatusArea>
          <StatusSlot $gap={0} $w={36}><BIcon /></StatusSlot>
          <StatusSlot $gap={38} $w={72}><ToggleIcon /></StatusSlot>
          <StatusSlot $gap={48} $w={42}><HatIcon /></StatusSlot>
          <StatusSlot $gap={50} $w={34}><SplitIcon /></StatusSlot>
          <StatusSlot $gap={41} $w={17}><ClipIcon /></StatusSlot>
          <StatusSlot $gap={41} $w={18}><Bluetooth size={32} color="#e4e5e9" strokeWidth={1.8} /></StatusSlot>
          <StatusSlot $gap={39} $w={50}><BatteryIcon /></StatusSlot>
          <StatusSlot $gap={36} $w={28}><PlayIcon /></StatusSlot>
          <StatusSlot $gap={41} $w={34}><WifiIcon /></StatusSlot>
          <StatusSlot $gap={40} $w={25}><Search size={29} color="#e8e9ed" strokeWidth={2} /></StatusSlot>
          <StatusSlot $gap={38} $w={32}><TagIcon /></StatusSlot>
          <StatusSlot $gap={36} $w={29}><ControlsIcon /></StatusSlot>
          <StatusSlot $gap={33} $w={28}><SiriIcon /></StatusSlot>
          <DateText>
            <span>Fri Dec 30</span>
            <span>12:05 AM</span>
          </DateText>
        </StatusArea>
      </MenuBar>

      <Window>
        <TabStrip>
          <Lights>
            <Light $color="#ed6a5e" />
            <Light $color="#f4bf4f" />
            <Light $color="#61c554" />
          </Lights>
          {tabs.map((t, i) => (
            <React.Fragment key={i}>
              {t.sep ? <TabSep /> : null}
              <Tab $state={t.state}>
                <Favicon><TabIcon kind={t.icon} /></Favicon>
                <TabTitle $fade={t.fade}>{t.title}</TabTitle>
                <TabClose strokeWidth={2.2} />
              </Tab>
            </React.Fragment>
          ))}
          <TabSep />
          <NewTab strokeWidth={2.8} />
          <TabMenu strokeWidth={2.2} />
        </TabStrip>

        <Toolbar>
          <NavButton><ArrowLeft size={32} strokeWidth={2.2} /></NavButton>
          <NavButton $off><ArrowRight size={32} strokeWidth={2.2} /></NavButton>
          <NavButton $gap={29}><RotateCw size={32} strokeWidth={2.4} /></NavButton>
          <AddressBar>
            <Info size={28} strokeWidth={2} color="#a9abae" />
            <Url><b>localhost</b>:8888/projects/old/</Url>
            <ToolIcon $auto><ShareIcon /></ToolIcon>
            <ToolIcon $gap={35}><MdStarBorder size={36} color="#a9abae" /></ToolIcon>
          </AddressBar>
          <ToolIcon $gap={25}><MdExtension size={36} color="#f1f3f4" /></ToolIcon>
          <PanelIcon />
          <Avatar>B</Avatar>
          <Kebab><i /><i /><i /></Kebab>
        </Toolbar>

        <BookmarkBar>
          {bookmarks.map((b) => (
            <Bookmark key={b}>
              <FolderIcon />
              {b}
            </Bookmark>
          ))}
        </BookmarkBar>

        <Content>
          <Hello>Hi.</Hello>
          <Name>My name is Ben.</Name>
          <Paragraph>
            I’m a full-stack developer based in New York. I build and maintain websites and web applications. Centered on
            building readable, functional software to deliver intuitive experiences and solve problems.
          </Paragraph>
          <Paragraph>
            Currently under mentorship at Perpetual Education. Honing my professional skills and learning about the design
            and development process from idea to implementation.
          </Paragraph>
          <Selected>selected work</Selected>
          <WorkLink href="#goals">the goals</WorkLink>
          <WorkLink href="#responsive">responsive design</WorkLink>
          <WorkLink href="#concept">concept layout</WorkLink>
          <Footer>
            <span>email</span>
            <span>github</span>
            <span>substack</span>
          </Footer>
        </Content>
      </Window>

      <DockArea>
        <Dock>
          <DockGroup items={firstGroup} />
          <DockSep $l={20} $r={15} />
          <DockGroup items={secondGroup} />
          <DockSep $l={19} $r={18} />
          <DockGroup items={thirdGroup} />
        </Dock>
      </DockArea>
    </Page>
  );
}
